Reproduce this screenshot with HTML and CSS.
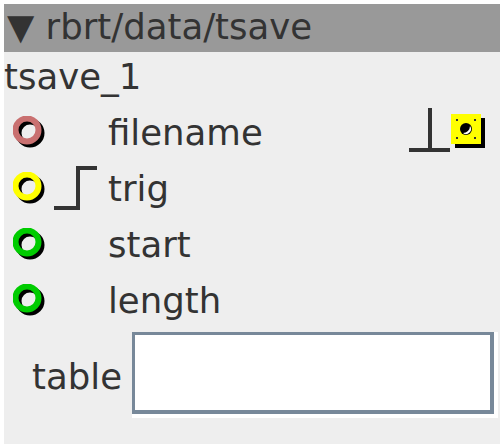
FILE: index.html
```html
<!DOCTYPE html>
<html>
<head>
<meta charset="utf-8">
<link rel="stylesheet" href="styles.css">
</head>
<body>
<div class="panel">
  <div class="header">▼ rbrt/data/tsave</div>
  <div class="name">tsave_1</div>
  <div class="row">
    <div class="port">
      <svg width="40" height="40" viewBox="0 0 40 40"><circle cx="17" cy="17" r="11.5" fill="none" stroke="#000" stroke-width="6"/><circle cx="14" cy="14" r="11.5" fill="none" stroke="#c97070" stroke-width="6"/></svg>
    </div>
    <div class="mode"></div>
    <div class="label">filename</div>
    <div class="right">
      <svg class="tee" width="44" height="44" viewBox="0 0 44 44"><path d="M21 0 V42 M0 42 H41" fill="none" stroke="#333" stroke-width="4"/></svg>
      <svg class="target" width="36" height="36" viewBox="0 0 36 36"><rect x="4" y="4" width="30" height="30" fill="#000"/><rect x="0" y="0" width="30" height="30" fill="#ffff00"/><circle cx="15" cy="15" r="6" fill="#000"/><path d="M12 19 A5 5 0 0 0 19 12 A7 7 0 0 1 12 19 Z" fill="#fff"/><g fill="#333"><rect x="5" y="5" width="2" height="2"/><rect x="23" y="5" width="2" height="2"/><rect x="5" y="23" width="2" height="2"/><rect x="23" y="23" width="2" height="2"/></g></svg>
    </div>
  </div>
  <div class="row">
    <div class="port">
      <svg width="40" height="40" viewBox="0 0 40 40"><circle cx="17" cy="17" r="11.5" fill="none" stroke="#000" stroke-width="6"/><circle cx="14" cy="14" r="11.5" fill="none" stroke="#ffff00" stroke-width="6"/></svg>
    </div>
    <div class="mode">
      <svg width="44" height="44" viewBox="0 0 44 44"><path d="M0 42 H24 V2 H43" fill="none" stroke="#333" stroke-width="4"/></svg>
    </div>
    <div class="label">trig</div>
  </div>
  <div class="row">
    <div class="port">
      <svg width="40" height="40" viewBox="0 0 40 40"><circle cx="17" cy="17" r="11.5" fill="none" stroke="#000" stroke-width="6"/><circle cx="14" cy="14" r="11.5" fill="none" stroke="#00cc00" stroke-width="6"/></svg>
    </div>
    <div class="mode"></div>
    <div class="label">start</div>
  </div>
  <div class="row">
    <div class="port">
      <svg width="40" height="40" viewBox="0 0 40 40"><circle cx="17" cy="17" r="11.5" fill="none" stroke="#000" stroke-width="6"/><circle cx="14" cy="14" r="11.5" fill="none" stroke="#00cc00" stroke-width="6"/></svg>
    </div>
    <div class="mode"></div>
    <div class="label">length</div>
  </div>
  <div class="field">
    <div class="flabel">table</div>
    <div class="entry"></div>
  </div>
</div>
</body>
</html>
```
FILE: styles.css
```css
html, body {
  margin: 0;
  padding: 0;
  background: #ffffff;
}
.panel {
  margin: 4px 0 0 4px;
  width: 496px;
  height: 440px;
  background: #eeeeee;
  font-family: "DejaVu Sans", sans-serif;
  color: #333333;
  font-size: 35.5px;
}
.header {
  height: 48px;
  background: #999999;
  line-height: 46px;
  white-space: nowrap;
  padding-left: 3px;
}
.name {
  height: 52px;
  line-height: 50px;
}
.row {
  height: 56px;
  display: flex;
  align-items: center;
}
.port {
  width: 40px;
  height: 40px;
  margin-left: 9px;
  margin-top: 8px;
}
.mode {
  width: 44px;
  height: 44px;
  margin-left: 1px;
}
.label {
  margin-left: 10px;
  flex: 1;
}
.right {
  display: flex;
  align-items: flex-start;
  height: 44px;
  margin-right: 13px;
}
.tee {
  margin-top: -2px;
  margin-right: -2px;
}
.target {
  margin-top: 4px;
}
.field {
  display: flex;
  align-items: center;
  margin-top: 4px;
  height: 82px;
}
.flabel {
  width: 128px;
  text-align: right;
  padding-right: 10px;
  padding-top: 6px;
  box-sizing: border-box;
}
.entry {
  width: 362px;
  height: 82px;
  box-sizing: border-box;
  background: #ffffff;
  border-style: solid;
  border-color: #778899;
  border-width: 3px 4px 4px 3px;
  box-shadow: 2px 2px 0 2px #ffffff;
}
```
